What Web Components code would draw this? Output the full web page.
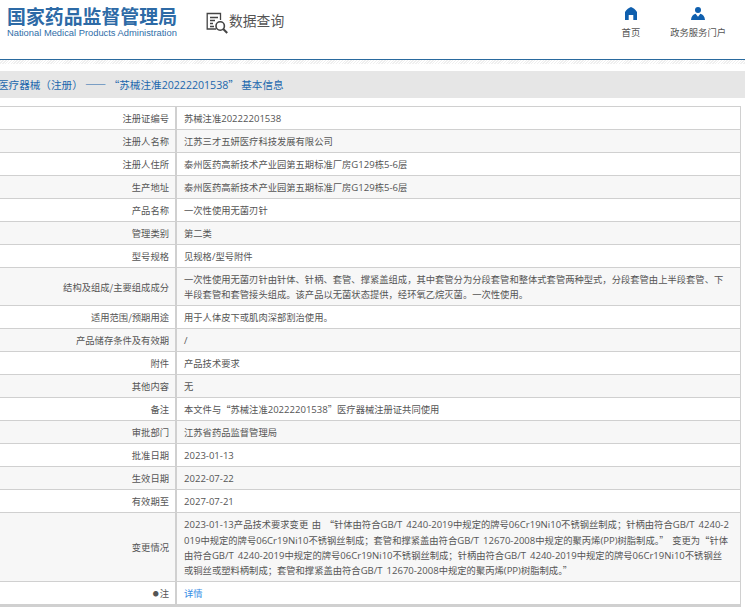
<!DOCTYPE html>
<html lang="zh"><head><meta charset="utf-8"><style>
html,body{margin:0;padding:0;background:#fff;overflow:hidden;height:610px}
body{font-family:"Noto Sans CJK SC",sans-serif}
info-row .lat{font-family:"Open Sans",sans-serif;font-size:9.55px}
page-title .lat{font-family:"Open Sans",sans-serif}
</style></head><body>
<nmpa-header></nmpa-header>
<page-title>医疗器械（注册） —— “苏械注准20222201538” 基本信息</page-title>
<info-table>
<info-row label="注册证编号">苏械注准20222201538</info-row>
<info-row alt label="注册人名称">江苏三才五妍医疗科技发展有限公司</info-row>
<info-row label="注册人住所">泰州医药高新技术产业园第五期标准厂房G129栋5-6层</info-row>
<info-row alt label="生产地址">泰州医药高新技术产业园第五期标准厂房G129栋5-6层</info-row>
<info-row label="产品名称">一次性使用无菌刃针</info-row>
<info-row alt label="管理类别">第二类</info-row>
<info-row label="型号规格">见规格/型号附件</info-row>
<info-row alt label="结构及组成/主要组成成分">一次性使用无菌刃针由针体、针柄、套管、撑紧盖组成，其中套管分为分段套管和整体式套管两种型式，分段套管由上半段套管、下半段套管和套管接头组成。该产品以无菌状态提供，经环氧乙烷灭菌。一次性使用。</info-row>
<info-row label="适用范围/预期用途">用于人体皮下或肌肉深部割治使用。</info-row>
<info-row alt label="产品储存条件及有效期">/</info-row>
<info-row label="附件">产品技术要求</info-row>
<info-row alt label="其他内容">无</info-row>
<info-row label="备注">本文件与“苏械注准20222201538”医疗器械注册证共同使用</info-row>
<info-row alt label="审批部门">江苏省药品监督管理局</info-row>
<info-row label="批准日期">2023-01-13</info-row>
<info-row alt label="生效日期">2022-07-22</info-row>
<info-row label="有效期至">2027-07-21</info-row>
<info-row alt label="变更情况">2023-01-13产品技术要求变更 由 “针体由符合GB/T 4240-2019中规定的牌号06Cr19Ni10不锈钢丝制成；针柄由符合GB/T 4240-2019中规定的牌号06Cr19Ni10不锈钢丝制成；套管和撑紧盖由符合GB/T 12670-2008中规定的聚丙烯(PP)树脂制成。” 变更为“针体由符合GB/T 4240-2019中规定的牌号06Cr19Ni10不锈钢丝制成；针柄由符合GB/T 4240-2019中规定的牌号06Cr19Ni10不锈钢丝
或铜丝或塑料柄制成；套管和撑紧盖由符合GB/T 12670-2008中规定的聚丙烯(PP)树脂制成。”</info-row>
<info-row label="注" mark link>详情</info-row>
</info-table>
<script>
function shadow(el,html){el.attachShadow({mode:'open'}).innerHTML=html}
function latin(el){el.innerHTML=el.textContent.replace(/[\x21-\x7e][\x20-\x7e]*/g,m=>`<span class="lat">${m}</span>`)}
customElements.define('nmpa-header',class extends HTMLElement{connectedCallback(){shadow(this,`<style>
:host{display:flex;height:59px;align-items:flex-start;color:#555}
.logo{margin:5px 0 0 7px;width:172px}
.cn{font:700 18.9px/21px "Noto Sans CJK SC",sans-serif;color:#2d6aa6;white-space:nowrap}
.en{font:9.35px/11px "Liberation Sans",sans-serif;color:#2f6ea8;margin-top:2px;white-space:nowrap}
.dq{display:flex;align-items:flex-start;margin:10px 0 0 27px;gap:1px;color:#555;font:13.8px/20px "Noto Sans CJK SC",sans-serif}
.dq svg{margin-top:2px}
.nav{margin-left:auto;display:flex;margin-right:19px;gap:30px}
.nav div{display:flex;flex-direction:column;align-items:center;font:9.3px/12px "Noto Sans CJK SC",sans-serif;color:#555;margin-top:7px;gap:6px}
svg{display:block}
</style>
<div class="logo"><div class="cn">国家药品监督管理局</div><div class="en">National Medical Products Administration</div></div>
<div class="dq"><svg width="22" height="22" viewBox="0 0 22 22" fill="none" stroke="#444" stroke-width="1.3"><path d="M10 17H1.2V1.5H14.5V8"/><path d="M4 5.5h8M4 8.5h5M4 11.5h3M4 14.5h4"/><circle cx="14.2" cy="14" r="4.2" stroke-width="1.6"/><path d="M17.2 17l4 4" stroke-width="2"/></svg><span>数据查询</span></div>
<div class="nav"><div><svg width="14" height="13" viewBox="0 0 14 13" fill="#0f5fae"><path d="M7 0C9 .6 11.5 2.6 13 5V13H9.3V8H4.7V13H1V5C2.5 2.6 5 .6 7 0Z"/></svg><span>首页</span></div>
<div><svg width="14" height="13" viewBox="0 0 14 13" fill="#0f5fae"><circle cx="7" cy="3" r="3"/><path d="M0 13C.3 9.2 2 7.6 4.6 6.8L7 9.8L9.4 6.8C12 7.6 13.7 9.2 14 13Z"/></svg><span>政务服务门户</span></div></div>`)}});
customElements.define('page-title',class extends HTMLElement{connectedCallback(){latin(this);shadow(this,`<style>
:host{display:block;height:39px;box-sizing:border-box;padding-top:11px;background:linear-gradient(#e6e6e6,#e6e6e6) 0 11px/100% 27px no-repeat,repeating-linear-gradient(135deg,#efefef 0 1px,#fff 1px 2px) 0 0/100% 4px no-repeat;border-top:1px solid #2a6a9e;overflow:hidden}
div{margin-left:-2px;font:10.6px/27px "Noto Sans CJK SC",sans-serif;color:#1b66ad;white-space:nowrap}
</style><div><slot></slot></div>`)}});
customElements.define('info-table',class extends HTMLElement{connectedCallback(){shadow(this,`<style>
:host{display:block;margin:8px 4px 0 -2px;border:solid #d0d0d0;border-width:1px 1px 3px 1px}
</style><slot></slot>`)}});
customElements.define('info-row',class extends HTMLElement{connectedCallback(){const l=this.getAttribute('label'),m=this.hasAttribute('mark');latin(this);shadow(this,`<style>
:host{display:grid;grid-template-columns:178px 1fr;min-height:22px;font:9.3px/15.3px "Noto Sans CJK SC",sans-serif;word-spacing:1.5px;color:#555;border-top:1px solid #d0d0d0}
:host(:first-child){border-top:0}
:host([alt]){background:#f7f7f7}
.l{display:flex;align-items:center;justify-content:flex-end;padding:1.2px 6px 0;border-right:2px solid #d0d0d0}
.m{font-size:6px;margin-right:1px;color:#555}
.v{padding:3.95px 8.5px 2.75px 7px;align-self:center;word-break:break-all;white-space:pre-line}
:host([link]) .v{color:#3a8ee6}
</style><div class="l">${m?'<span class="m">●</span>':''}<span>${l}</span></div><div class="v"><slot></slot></div>`)}});
</script></body></html>
